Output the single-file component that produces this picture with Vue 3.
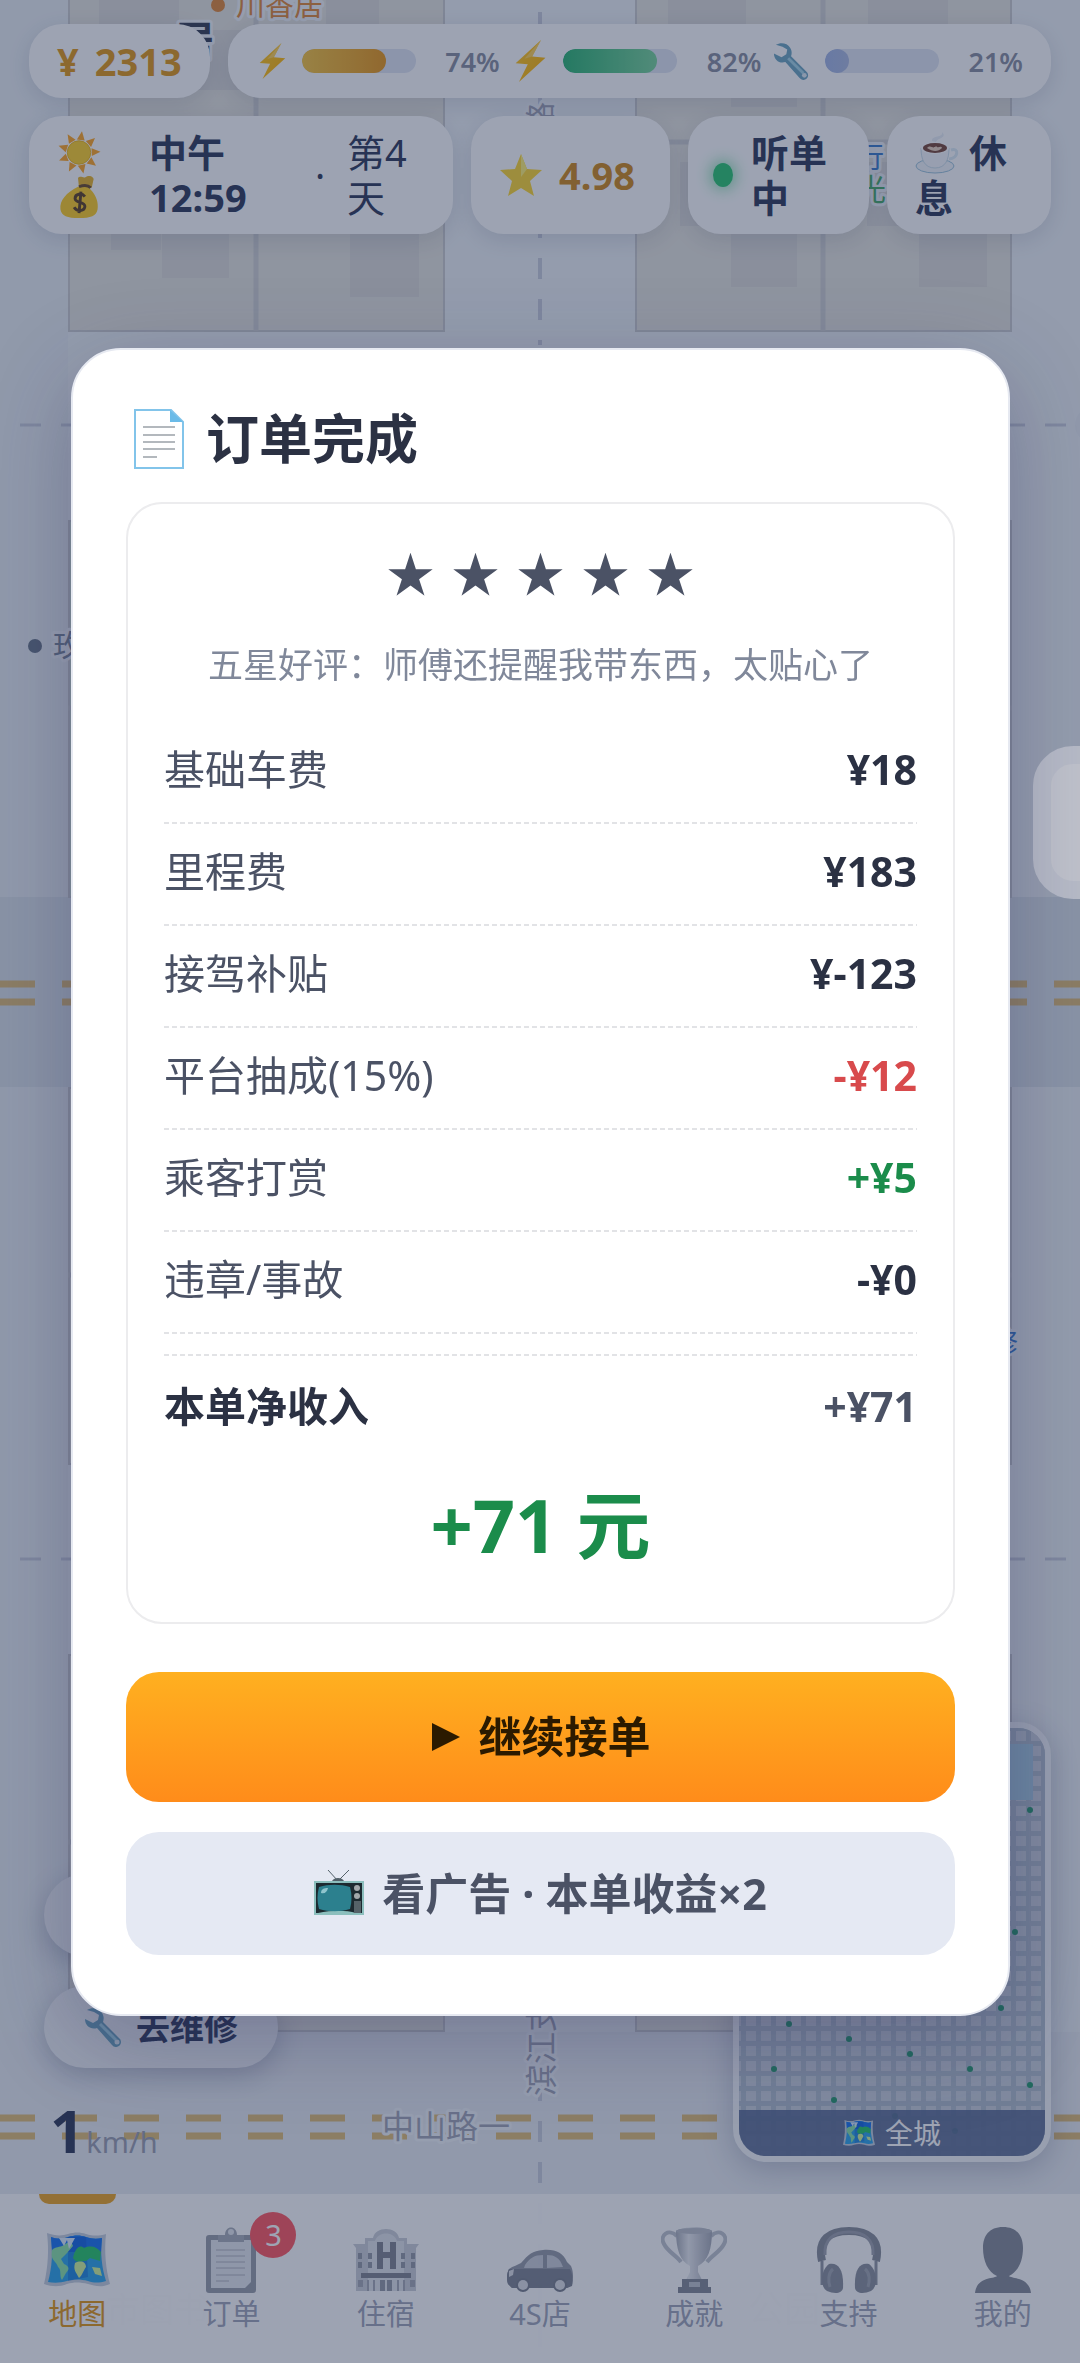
<template>
  <div class="game">
    <svg class="icon-defs" aria-hidden="true">
      <defs>
        <linearGradient id="g-bolt" x1="0" y1="0" x2="1" y2="1">
          <stop offset="0" stop-color="#ffca28" />
          <stop offset="1" stop-color="#ffb300" />
        </linearGradient>
        <linearGradient id="g-cup" x1="0" y1="0" x2="1" y2="0">
          <stop offset="0" stop-color="#8a909e" />
          <stop offset=".35" stop-color="#e2e4ea" />
          <stop offset="1" stop-color="#868c9b" />
        </linearGradient>
      </defs>
      <symbol id="i-bolt" viewBox="0 0 28 38">
        <path d="M24 0 1 21l11 1L4 38 28 16l-12-1z" fill="url(#g-bolt)" />
        <path d="M24 0 9 17l7-2z" fill="#ffe082" opacity=".6" />
      </symbol>
      <symbol id="i-wrench" viewBox="0 0 40 40">
        <path d="M3 3c5-3 12-2 15 3 2 3 2 6 1 9l16 16a5 5 0 1 1-7 7L13 21C7 23 1 19 1 12l8 4 5-3 1-5-5-3z" fill="#6fa5c0" />
        <path d="M16 17 32 33" stroke="#a5d4e6" stroke-width="3" />
        <circle cx="33" cy="35" r="2.5" fill="#dfeaf2" />
      </symbol>
      <symbol id="i-sun" viewBox="0 0 44 44">
        <path v-for="n in 9" :key="n" d="M22 0l4 9h-8z" fill="#ffa726" :transform="`rotate(${n * 40 + 8} 22 22)`" />
        <circle cx="22" cy="22" r="12" fill="#fdd12c" stroke="#efb91c" />
      </symbol>
      <symbol id="i-money" viewBox="0 0 44 44">
        <path d="M21 2c3-3 5 1 8-1 3-2 7-1 8 2l-2 9H22z" fill="#e8b52b" />
        <path d="M21 11c5-2 11-1 13 3 6 6 8 14 7 20-1 7-7 9-19 9S4 41 3 34c-1-9 6-17 18-23z" fill="#fdce26" />
        <path d="M22 11c5-2 9-2 12 1" stroke="#6d4c2c" stroke-width="3" fill="none" />
        <path d="M28 21c-3-4-10-3-10 2s10 3 10 8-8 6-11 1M24 16l-2 22" fill="none" stroke="#5d4326" stroke-width="3" />
      </symbol>
      <symbol id="i-star" viewBox="0 0 44 44">
        <path d="M22 1l6 15 15 1-12 11 4 15-13-8-13 8 4-15L1 17l15-1z" fill="#fdd835" />
        <path d="M22 1l6 15-6 8z" fill="#fff176" />
      </symbol>
      <symbol id="i-coffee" viewBox="0 0 44 44">
        <path d="M17 10c-1-6 12-3 10-9 6 6-5 6-6 10z" fill="#e8eef5" />
        <ellipse cx="20" cy="35" rx="19" ry="7" fill="#f1f5f8" stroke="#9cc3da" />
        <path d="M36 19c8-3 8 8-2 9" fill="none" stroke="#dcebf3" stroke-width="3" />
        <path d="M6 17h28c0 11-3 20-14 20S6 28 6 17z" fill="#f4f7fa" stroke="#cbdde8" />
        <ellipse cx="20" cy="17" rx="14" ry="6" fill="#fff" />
        <ellipse cx="20" cy="17" rx="12" ry="5" fill="#7b4a3c" />
        <path d="M12 17c4-4 6 2 9-2 2 3 5-1 6 2-4 4-9 4-15 0z" fill="#e8d0bc" />
      </symbol>
      <symbol id="i-page" viewBox="0 0 50 60">
        <path d="M1 1h36l12 12v46H1z" fill="#fff" stroke="#82c4ea" stroke-width="2" />
        <path d="M36 1v12h13z" fill="#6bbbe8" />
        <path d="M9 18h32M9 26h32M9 33h32M9 40h32M9 48h14" stroke="#b3b8bd" stroke-width="2" />
      </symbol>
      <symbol id="i-tv" viewBox="0 0 50 48">
        <path d="M14 1 24 12 35 1" fill="none" stroke="#53616a" />
        <path d="M18 12c2-4 10-4 12 0z" fill="#53616a" />
        <path d="M0 12h50v34H0z" fill="#8cbfbd" />
        <path d="M2 14h46v30h-6c-10-3-24-3-38 0H2z" fill="#1d2a30" />
        <path d="M5 18c10-3 21-3 31 0 2 7 2 15 0 22-10 3-21 3-31 0-2-7-2-15 0-22z" fill="#2c808e" />
        <path d="M7 24c0-4 3-5 7-5-1 4-3 6-7 5z" fill="#8fc5cd" />
        <circle cx="43" cy="19" r="3" fill="#a2a8aa" /><circle cx="43" cy="27" r="3" fill="#a2a8aa" />
        <path d="M40 32h7v12h-7z" fill="#566268" />
      </symbol>
      <symbol id="i-map" viewBox="0 0 66 54">
        <path d="M3 0c8 3 15 3 21 1 7-2 12-2 18 0 7 2 13 2 20 0-2 18 0 36 4 50-9 4-15 2-22 0-8-2-14-2-21 0-7 3-15 3-23 0C4 34 5 17 3 0z" fill="#c5cfdc" />
        <path d="M7 4c6 2 11 2 17 0 7-2 12-2 18 0 6 2 11 2 16 1-2 15 0 30 4 43-7 2-12 2-18 0-8-2-14-2-21 0-7 2-13 2-19 1C8 34 9 19 7 4z" fill="#2fa6ea" />
        <path d="M7 4c6 2 11 2 17 0 7-2 12-2 18 0 6 2 11 2 16 1l-1 14H8z" fill="#1c76f2" />
        <path d="M24 4v44l20-4-2-40z" fill="#1257c9" opacity=".35" />
        <path d="M8 17c4-4 7-2 12-5 5-4 8-3 9 1l-6 7-6 6 3 5c5 2 6 5 2 9l-4 7c-3-4 0-10-4-13-2-7-8-6-6-17z" fill="#8de3a9" />
        <path d="M29 25c2-10 7-14 11-10 7-3 13-1 17 4l-1 9-10-3-4 3c-7 0-9 3-13-3z" fill="#2cc96c" />
        <path d="M31 30c6-3 11-1 11 4-3 4-4 9-7 11-3-6-6-8-4-15zM48 34l8 1 2 8-7-2z" fill="#d3f59b" />
        <path d="M15 5l5 8 3-6 2 9 6-11z" fill="#dcedfb" />
      </symbol>
      <symbol id="i-list" viewBox="0 0 50 66">
        <rect y="8" width="50" height="58" rx="3" fill="#757b8a" />
        <path d="M5 13h40v42l-6 6H5z" fill="#dee1e8" />
        <path d="M12 15V8h7c0-10 12-10 12 0h7v7z" fill="#8b919f" />
        <circle cx="25" cy="5" r="3" fill="#dee1e8" />
        <path d="M10 23h29M10 29h29M10 35h29M10 41h29M10 48h29M10 54h13" stroke="#9298a6" />
      </symbol>
      <symbol id="i-hotel" viewBox="0 0 66 62">
        <path d="M3 62V19l-3-4h12V9h8C22-3 44-3 46 9h8v6h12l-3 4v43z" fill="#b9bec9" />
        <path d="M15 62V12h7C25 2 41 2 44 12h7v50z" fill="#d7dae2" />
        <path d="M24 13h6v10h7V13h6v27h-6V29h-7v11h-6zM8 44h50v5H8z" fill="#525969" />
        <path d="M5 24h4v6H5zm0 9h4v6H5zm10-9h4v6h-4zm0 9h4v6h-4zm33-9h4v6h-4zm0 9h4v6h-4zm10-9h4v6h-4zm0 9h4v6h-4zM27 51h5v11h-5zm7 0h5v11h-5z" fill="#6d7484" />
        <path d="M5 51h5v7H5zM14 51h2v11h-2zM20 51h2v11h-2zM44 51h2v11h-2zM50 51h2v11h-2zM57 51h5v7h-5z" fill="#858b99" />
      </symbol>
      <symbol id="i-car" viewBox="0 0 66 66">
        <g transform="translate(0 23)">
          <path d="M2 19c4-3 9-4 12-6C22 4 25 1 36 0c13-1 20 3 24 12l4 4c3 7 2 13 1 19l-5 3H5l-4-4c-2-6-1-11 1-15z" fill="#707787" />
          <path d="M2 19h61c3 6 3 12 2 17l-5 2H5l-4-4c-2-6-1-11 1-15z" fill="#50586a" />
          <path d="M18 15c5-7 9-10 18-10v13H17zM40 5c8 0 13 3 16 12l-16 1z" fill="#b8bdca" />
          <circle cx="16" cy="35" r="7" fill="#4a5162" /><circle cx="53" cy="35" r="7" fill="#4a5162" />
          <circle cx="16" cy="35" r="5" fill="#d0d3db" /><circle cx="53" cy="35" r="5" fill="#d0d3db" />
          <path d="M2 21l5-2-1 6-4 2z" fill="#d0d3db" />
        </g>
      </symbol>
      <symbol id="i-trophy" viewBox="0 0 66 66">
        <path d="M16 9C8 1-2 8 3 17c4 8 12 11 17 18M50 9c8-8 18-1 13 8-4 8-12 11-17 18" fill="none" stroke="#a9afbc" stroke-width="4" />
        <path d="M15 4c8-5 28-5 36 0 0 18-4 30-14 35v6l4 8H25l4-8v-6C19 34 15 22 15 4z" fill="url(#g-cup)" />
        <ellipse cx="33" cy="4" rx="18" ry="3" fill="#a3a9b6" />
        <path d="M21 52h26v8h3v6H17v-6h4z" fill="#596070" />
        <path d="M28 55h11v5H28z" fill="#a9afbc" />
      </symbol>
      <symbol id="i-phones" viewBox="0 0 62 66">
        <path d="M4 34C-1 12 12 4 31 4s32 8 27 30" fill="none" stroke="#5e6575" stroke-width="8" />
        <path d="M7 28C6 13 15 5 31 5s25 8 24 23" fill="none" stroke="#7b8190" stroke-width="3" />
        <path d="M4 34v24M58 34v24" stroke="#6b7282" stroke-width="3" />
        <path d="M11 37c9-2 15 5 14 24-1 6-9 6-16 3C2 60 2 44 11 37z" fill="#616878" />
        <path d="M51 37c-9-2-15 5-14 24 1 6 9 6 16 3 7-4 7-20-2-27z" fill="#616878" />
        <path d="M15 42c-5 4-5 12-3 18M47 42c5 4 5 12 3 18" stroke="#818796" stroke-width="3" fill="none" />
      </symbol>
      <symbol id="i-person" viewBox="0 0 56 66">
        <path d="M28 0c14 0 20 9 20 21 0 13-5 24-14 28 2 3 20 0 22 17H0c2-17 20-14 22-17C13 45 8 34 8 21 8 9 14 0 28 0z" fill="#5a6172" />
      </symbol>
    </svg>

    <!-- city map behind the HUD -->
    <svg class="city" viewBox="0 0 1080 2363" preserveAspectRatio="xMidYMid slice" aria-hidden="true">
      <rect width="1080" height="2363" fill="#eef2f5" />
      <rect width="68" height="2363" fill="#e9eef2" />
      <rect y="897" width="1080" height="190" fill="#dce3e9" />
      <rect y="2032" width="1080" height="331" fill="#e9ecf1" />

      <g v-for="b in blocks" :key="b.x + '-' + b.y" :transform="`translate(${b.x} ${b.y})`">
        <rect x="1" y="1" width="375" height="376" :fill="b.fill" stroke="#cbccce" stroke-width="2" />
        <path d="M188 0V377M0 188H377" stroke="#d0d1d2" stroke-width="5" />
        <path :d="b.houses" fill="#dcdbd8" />
      </g>

      <path d="M540-29V345M540 2080V2363" class="lane lane--v" />
      <path d="M20 425H1080M20 1559H1080" class="lane" />
      <path d="M0 984H1080M0 1002H1080M0 2118H1080M0 2136H1080" class="centre-line" />

      <circle cx="218" cy="5" r="7" fill="#e08a3c" />
      <text x="236" y="16" class="tag" fill="#e08a3c" font-size="29">川香居</text>
      <text x="174" y="55" class="tag tag--bold" fill="#3a4256" font-size="40">居</text>
      <text class="tag" fill="#a3a6b6" font-size="30" transform="translate(551 132) rotate(-90)">路</text>
      <text x="856" y="168" class="tag" fill="#3f7fd0" font-size="28">行</text>
      <text x="856" y="200" class="tag" fill="#4caf6b" font-size="30">光</text>
      <circle cx="35" cy="646" r="7" fill="#6b7789" />
      <text x="53" y="656" class="tag" fill="#7d8799" font-size="30">玫瑰</text>
      <text x="990" y="1353" class="tag" fill="#3f7fd0" font-size="28">修</text>
      <circle cx="1094" cy="425" r="16" fill="#1f9d6b" stroke="#e8ecf2" stroke-width="6" />
      <text x="382" y="2138" class="tag" fill="#a3a6b6" font-size="32">中山路一</text>
      <text class="tag" fill="#a3a6b6" font-size="32" transform="translate(553 2096) rotate(-90)">滨江支路</text>
      <text x="106" y="2322" class="tag" fill="#a3a6b6" font-size="34">市图书</text>
      <text x="748" y="2322" class="tag" fill="#a3a6b6" font-size="36">公园</text>
    </svg>

    <main class="stage">
      <header class="hud">
        <div class="hud-row">
          <div class="chip chip--money">
            <span>¥</span>
            <span>2313</span>
          </div>
          <div class="chip chip--stats">
            <div v-for="s in stats" :key="s.name" class="stat">
              <svg :class="['stat__icon', s.cls]"><use :href="s.icon" /></svg>
              <span class="stat__bar">
                <span class="stat__fill" :class="s.name" :style="{ width: s.value + '%' }"></span>
              </span>
              <span class="stat__value">{{ s.value }}%</span>
            </div>
          </div>
        </div>
        <div class="hud-grid">
          <div class="chip chip--time">
            <span class="weather">
              <svg><use href="#i-sun" /></svg>
              <svg><use href="#i-money" /></svg>
            </span>
            <strong>中午<br />12:59</strong>
            <span>·</span>
            <span>第4<br />天</span>
          </div>
          <div class="chip chip--rating">
            <svg><use href="#i-star" /></svg>
            4.98
          </div>
          <button type="button" class="chip chip--online">
            <i class="dot"></i>
            <span>听单<br />中</span>
          </button>
          <button type="button" class="chip chip--rest">
            <span><svg><use href="#i-coffee" /></svg> 休<br />息</span>
          </button>
        </div>
      </header>

      <div class="dock">
        <div class="dock__left">
          <button type="button" class="quick">
            <svg><use href="#i-bolt" /></svg>
            去充电
          </button>
          <button type="button" class="quick">
            <svg><use href="#i-wrench" /></svg>
            去维修
          </button>
          <p class="speed"><b>1</b><span>km/h</span></p>
        </div>
        <button type="button" class="minimap">
          <svg class="minimap__grid" viewBox="0 0 306 428" preserveAspectRatio="xMidYMin slice" aria-hidden="true">
            <defs>
              <pattern id="tiles" width="15" height="15" patternUnits="userSpaceOnUse">
                <rect width="15" height="15" fill="#b3bfcd" />
                <rect x="7" y="3" width="10" height="10" fill="#cdd3dd" />
                <rect x="0" y="3" width="2" height="10" fill="#cdd3dd" />
              </pattern>
            </defs>
            <rect width="306" height="428" fill="url(#tiles)" />
            <rect x="220" y="16" width="74" height="56" fill="#a9cbe0" />
            <circle v-for="(p, i) in mapDots" :key="i" :cx="p[0]" :cy="p[1]" r="3" fill="#2b9a6e" />
          </svg>
          <span class="minimap__label">
            <svg><use href="#i-map" /></svg>
            全城
          </span>
        </button>
      </div>
    </main>

    <nav class="tabs">
      <button
        v-for="t in tabs"
        :key="t.label"
        type="button"
        class="tab"
        :class="{ 'tab--active': t.active }"
      >
        <svg class="tab__icon"><use :href="t.icon" /></svg>
        <span>{{ t.label }}</span>
        <em v-if="t.badge" class="tab__badge">{{ t.badge }}</em>
      </button>
    </nav>

    <div class="mask">
      <div class="float-ball"></div>
      <section class="modal" role="dialog" aria-modal="true" aria-labelledby="modal-title">
        <h2 id="modal-title" class="modal__title">
          <svg><use href="#i-page" /></svg>
          订单完成
        </h2>

        <div class="bill">
          <div class="bill__stars"><span v-for="n in 5" :key="n">★</span></div>
          <p class="bill__review">五星好评：师傅还提醒我带东西，太贴心了</p>
          <dl class="bill__rows">
            <div v-for="r in rows" :key="r.label" class="bill__row">
              <dt>{{ r.label }}</dt>
              <dd :class="r.tone">{{ r.value }}</dd>
            </div>
            <div class="bill__row bill__row--total">
              <dt>本单净收入</dt>
              <dd>+¥71</dd>
            </div>
          </dl>
          <p class="bill__sum">+71 元</p>
        </div>

        <button type="button" class="btn btn--primary">
          <svg viewBox="0 0 30 30"><path d="M1 1v28l28-14z" fill="currentColor" /></svg>
          继续接单
        </button>
        <button type="button" class="btn btn--ghost">
          <svg><use href="#i-tv" /></svg>
          看广告 · 本单收益×2
        </button>
      </section>
    </div>
  </div>
</template>

<script setup>
const HOUSES_A = 'M31 0h80v80h-80zM130 76h50v60h-50zM258 0h53v70h-53zM43 200h50v96h-50zM94 260h67v64h-67zM282 275h69v68h-69z'
const HOUSES_B = 'M33 0h78v70h-78zM233 0h80v70h-80zM96 100h66v53h-66zM45 208h50v64h-50zM232 208h50v64h-50zM96 260h66v73h-66zM284 260h68v73h-68z'

const blocks = [
  { x: 68, y: -46, fill: '#e6e5de', houses: HOUSES_A },
  { x: 635, y: -46, fill: '#e6e5de', houses: HOUSES_B },
  { x: 68, y: 520, fill: '#cfdfd0', houses: '' },
  { x: 635, y: 520, fill: '#cfdfd0', houses: '' },
  { x: 68, y: 1087, fill: '#e6e5de', houses: HOUSES_B },
  { x: 635, y: 1087, fill: '#cfdfd0', houses: '' },
  { x: 68, y: 1654, fill: '#e6e5de', houses: '' },
  { x: 635, y: 1654, fill: '#e6e5de', houses: '' },
]

const stats = [
  { name: 'energy', icon: '#i-bolt', value: 74 },
  { name: 'battery', icon: '#i-bolt', cls: 'stat__icon--big', value: 82 },
  { name: 'wear', icon: '#i-wrench', cls: 'stat__icon--big', value: 21 },
]

const mapDots = [
  [291, 82], [276, 204], [262, 280], [50, 296], [110, 311], [171, 326],
  [35, 341], [231, 341], [291, 357], [95, 372], [156, 388], [216, 403],
]

const tabs = [
  { label: '地图', icon: '#i-map', active: true },
  { label: '订单', icon: '#i-list', badge: 3 },
  { label: '住宿', icon: '#i-hotel' },
  { label: '4S店', icon: '#i-car' },
  { label: '成就', icon: '#i-trophy' },
  { label: '支持', icon: '#i-phones' },
  { label: '我的', icon: '#i-person' },
]

const rows = [
  { label: '基础车费', value: '¥18' },
  { label: '里程费', value: '¥183' },
  { label: '接驾补贴', value: '¥-123' },
  { label: '平台抽成(15%)', value: '-¥12', tone: 'is-minus' },
  { label: '乘客打赏', value: '+¥5', tone: 'is-plus' },
  { label: '违章/事故', value: '-¥0' },
]
</script>

<style>
body {
  margin: 0;
}
</style>

<style scoped>
.game {
  position: relative;
  display: flex;
  flex-direction: column;
  min-height: 100vh;
  overflow: hidden;
  background: #eef2f5;
  color: #333d5c;
  font-family: "Noto Sans", "Noto Sans CJK SC", sans-serif;
  font-size: 38px;
  line-height: 45px;
}

.game *,
.game *::before,
.game *::after {
  box-sizing: border-box;
}

button {
  border: 0;
  margin: 0;
  font: inherit;
  color: inherit;
  text-align: left;
}

p,
h2,
dl,
dd {
  margin: 0;
}

.icon-defs {
  position: absolute;
  width: 0;
  height: 0;
}

/* map */
.city {
  position: absolute;
  inset: 0;
  width: 100%;
  height: 100%;
}

.lane {
  fill: none;
  stroke: #c9cddb;
  stroke-width: 3;
  stroke-dasharray: 21 20;
}

.lane--v {
  stroke-width: 4;
}

.centre-line {
  fill: none;
  stroke: #e0bd78;
  stroke-width: 7;
  stroke-dasharray: 35 27;
}

.tag {
  paint-order: stroke;
  stroke: #f1f4f8;
  stroke-width: 6px;
  stroke-linejoin: round;
}

.tag--bold {
  font-weight: 700;
}

/* hud */
.stage {
  position: relative;
  flex: 1;
  display: flex;
  flex-direction: column;
  justify-content: space-between;
  padding: 24px 29px 32px;
}

.hud {
  display: flex;
  flex-direction: column;
  gap: 18px;
}

.hud-row {
  display: flex;
  gap: 18px;
}

.hud-grid {
  display: grid;
  grid-template-columns: 424fr 199fr 181fr 164fr;
  gap: 18px;
}

.chip {
  display: flex;
  align-items: center;
  min-width: 0;
  padding: 14px 28px;
  border-radius: 33px;
  background: #fefefe;
  box-shadow: 0 6px 22px rgba(40, 50, 90, 0.14);
}

.chip--money {
  gap: 16px;
  height: 74px;
  color: #e0991c;
  font-weight: 700;
}

.chip--stats {
  flex: 1;
  justify-content: space-between;
}

.stat {
  display: flex;
  align-items: center;
  gap: 14px;
}

.stat__icon {
  width: 32px;
  height: 36px;
}

.stat__icon--big {
  width: 38px;
  height: 42px;
}

.stat__bar {
  width: 114px;
  height: 24px;
  border-radius: 12px;
  background: #e0e5f2;
  overflow: hidden;
}

.stat__fill {
  display: block;
  height: 100%;
  border-radius: 12px;
}

.energy {
  background: linear-gradient(90deg, #f5c542, #e8981c);
}

.battery {
  background: linear-gradient(90deg, #2fb574, #7bd49c);
}

.wear {
  background: linear-gradient(90deg, #a3b6e4, #adbbe0);
}

.stat__value {
  width: 70px;
  color: #8b90a0;
  font-size: 27px;
  font-weight: 600;
  text-align: right;
}

.chip--time {
  display: grid;
  grid-template-columns: 92px 166px 32px auto;
}

.weather {
  display: flex;
  flex-direction: column;
  gap: 2px;
}

.weather svg {
  width: 44px;
  height: 43px;
}

.chip--rating {
  gap: 16px;
  color: #cf8b20;
  font-weight: 700;
}

.chip--rating svg {
  flex: none;
  width: 44px;
  height: 44px;
}

.chip--online {
  gap: 18px;
  padding-left: 25px;
  padding-right: 0;
  font-weight: 700;
}

.dot {
  width: 20px;
  height: 24px;
  border-radius: 50%;
  background: #2fc673;
  box-shadow: 0 0 16px 2px rgba(47, 198, 115, 0.6);
}

.chip--rest {
  padding-right: 0;
  font-weight: 700;
}

.chip--rest svg {
  width: 44px;
  height: 44px;
  vertical-align: -8px;
}

/* bottom dock */
.dock {
  display: flex;
  justify-content: space-between;
  align-items: flex-end;
}

.dock__left {
  display: flex;
  flex-direction: column;
  align-items: flex-start;
  gap: 30px;
  padding-left: 15px;
}

.quick {
  display: flex;
  align-items: center;
  gap: 12px;
  height: 82px;
  padding: 0 40px;
  border-radius: 41px;
  background: #f0f2f6;
  box-shadow: 0 8px 26px rgba(40, 50, 90, 0.25);
  font-size: 34px;
  font-weight: 700;
}

.quick svg {
  width: 40px;
  height: 40px;
}

.speed {
  display: flex;
  align-items: baseline;
  gap: 2px;
  padding-left: 6px;
  height: 64px;
  line-height: 64px;
}

.speed b {
  font-size: 60px;
}

.speed span {
  color: #9c9fb0;
  font-size: 29px;
}

.minimap {
  position: relative;
  display: flex;
  flex-direction: column;
  justify-content: flex-end;
  width: 318px;
  height: 440px;
  padding: 0;
  border: 6px solid #f4f6f9;
  border-radius: 33px;
  overflow: hidden;
  background: #b3bfcd;
  box-shadow: 0 8px 30px rgba(40, 50, 90, 0.25);
}

.minimap__grid {
  position: absolute;
  inset: 0;
  width: 100%;
  height: 100%;
}

.minimap__label {
  position: relative;
  display: flex;
  align-items: center;
  justify-content: center;
  gap: 10px;
  height: 46px;
  background: rgba(95, 112, 150, 0.92);
  color: #fff;
  font-size: 28px;
}

.minimap__label svg {
  width: 32px;
  height: 28px;
}

/* tabs */
.tabs {
  position: relative;
  display: flex;
  background: rgba(254, 254, 254, 0.96);
}

.tab {
  position: relative;
  flex: 1;
  display: flex;
  flex-direction: column;
  align-items: center;
  padding: 33px 0 28px;
  background: none;
  color: #a0a5b8;
  font-size: 29px;
  line-height: 42px;
}

.tab__icon {
  width: 66px;
  height: 66px;
  opacity: 0.72;
}

.tab--active {
  color: #e0991c;
}

.tab--active .tab__icon {
  opacity: 1;
}

.tab--active::before {
  content: "";
  position: absolute;
  top: 0;
  width: 50%;
  height: 10px;
  border-radius: 0 0 10px 10px;
  background: #eda626;
}

.tab__badge {
  position: absolute;
  top: 18px;
  left: 50%;
  width: 46px;
  height: 46px;
  margin-left: 19px;
  border-radius: 50%;
  background: #ff5a62;
  color: #fff;
  font-size: 29px;
  font-style: normal;
  line-height: 46px;
  text-align: center;
}

/* result dialog */
.mask {
  position: fixed;
  inset: 0;
  display: flex;
  align-items: center;
  justify-content: center;
  padding: 0 70px 0 71px;
  overflow: hidden;
  background: rgba(24, 38, 74, 0.42);
}

.float-ball {
  position: absolute;
  top: 746px;
  right: -106px;
  width: 153px;
  height: 153px;
  border: 18px solid #b7bbc7;
  border-radius: 40px;
  background: #bfc2cb;
}

.modal {
  position: relative;
  flex: 1;
  padding: 58px 53px 59px;
  border: 2px solid #e6e9f1;
  border-radius: 50px;
  background: #fff;
  box-shadow: 0 24px 90px rgba(40, 40, 90, 0.3);
}

.modal__title {
  display: flex;
  align-items: center;
  gap: 22px;
  margin: 0 0 32px;
  padding-left: 8px;
  color: #2b3143;
  font-size: 53px;
  line-height: 62px;
}

.modal__title svg {
  width: 50px;
  height: 60px;
}

.bill {
  padding: 38px 36px 52px;
  border: 2px solid #ececee;
  border-radius: 36px;
}

.bill__stars {
  display: flex;
  justify-content: center;
  gap: 17px;
  color: #4b5265;
  font-size: 48px;
  line-height: 64px;
}

.bill__review {
  margin: 34px 0 32px;
  color: #80889a;
  font-size: 35px;
  line-height: 50px;
  text-align: center;
}

.bill__row {
  display: flex;
  align-items: center;
  justify-content: space-between;
  height: 102px;
  padding-bottom: 6px;
  background: repeating-linear-gradient(90deg, #e2e3e6 0 5px, transparent 5px 8px) bottom / 100% 2px no-repeat;
  color: #4b5265;
  font-size: 41px;
}

.bill__row dd {
  color: #2b3143;
  font-weight: 700;
}

.bill__row .is-minus {
  color: #d84a4c;
}

.bill__row .is-plus {
  color: #1b8c4b;
}

.bill__row--total {
  height: 110px;
  margin-top: 20px;
  padding-bottom: 4px;
  background-position: top;
}

.bill__row--total dt {
  color: #2b3143;
  font-weight: 700;
}

.bill__row--total dd {
  color: #4b5265;
}

.bill__sum {
  margin-top: 16px;
  color: #1b8c4b;
  font-size: 74px;
  font-weight: 700;
  line-height: 90px;
  text-align: center;
}

.btn {
  display: flex;
  align-items: center;
  justify-content: center;
  gap: 18px;
  width: 100%;
  border-radius: 33px;
  font-size: 43px;
  font-weight: 700;
}

.btn--primary {
  height: 130px;
  margin-top: 48px;
  background: linear-gradient(180deg, #ffb020, #ff8c1a);
  color: #2b1a00;
}

.btn--primary svg {
  width: 30px;
  height: 30px;
}

.btn--ghost {
  height: 123px;
  margin-top: 30px;
  background: #e5e9f3;
  color: #4b5265;
}

.btn--ghost svg {
  width: 50px;
  height: 48px;
}
</style>
